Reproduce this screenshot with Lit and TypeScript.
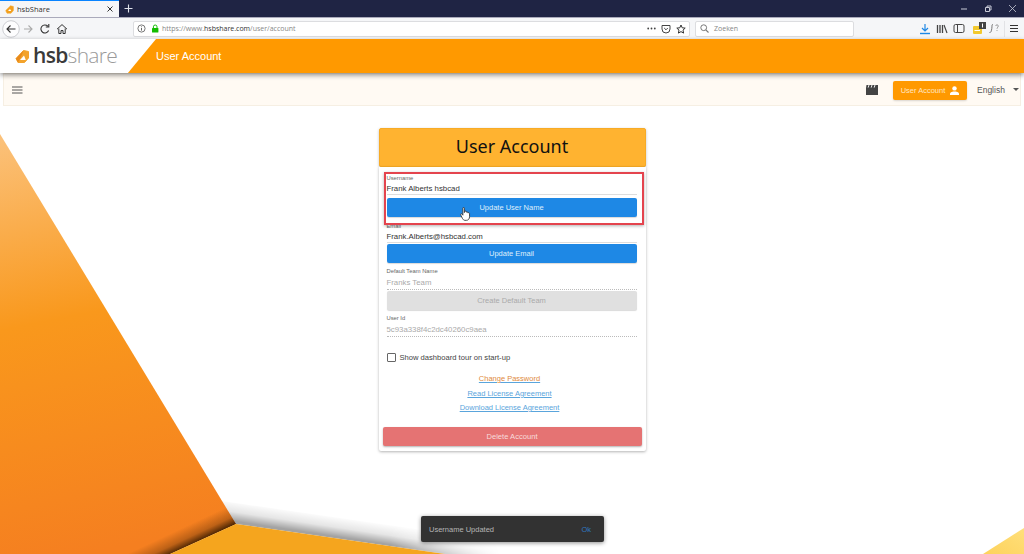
import { LitElement, html, css, svg } from "lit";
import { customElement } from "lit/decorators.js";

@customElement("app-root")
export class AppRoot extends LitElement {
  static styles = css`
    :host { display: block; font-family: "Liberation Sans", Arial, sans-serif; }
    * { box-sizing: border-box; }
    .app { position: relative; width: 1024px; height: 554px; overflow: hidden; background: #fff; display: flex; flex-direction: column; }
    .bg { position: absolute; left: 0; top: 0; }
    svg { display: block; flex: none; }

    .tabs { height: 17px; flex: none; background: #1f2444; display: flex; align-items: stretch; color: #fff; position: relative; }
    .tab { width: 119px; background: #f5f6f8; border-top: 1px solid #0a84ff; display: flex; align-items: center; padding: 0 5px; color: #333; font-size: 7.5px; gap: 3px; }
    .tab .t { flex: 1; font-family: "Open Sans", sans-serif; }
    .plus { width: 18px; display: flex; align-items: center; justify-content: center; }
    .winctl { margin-left: auto; display: flex; gap: 16px; align-items: center; padding-right: 7px; }

    .nav { height: 22px; flex: none; background: #f5f6f8; display: flex; align-items: center; border-top: 1px solid #aab; padding: 0 5px 0 2px; }
    .navbtns { display: flex; align-items: center; width: 131px; flex: none; gap: 5px; }
    .back { margin-right: -3px; }
    .urlbar { width: 557px; height: 16px; flex: none; background: #fff; border: 1px solid #dcdde0; border-radius: 2px; display: flex; align-items: center; padding: 0 3px; gap: 5px; font-size: 7px; font-family: "Open Sans", sans-serif; color: #888; }
    .urlbar b { color: #333; font-weight: 400; }
    .url { flex: 1; white-space: nowrap; margin-left: -2px; }
    .search { width: 159px; height: 16px; flex: none; margin-left: 5px; background: #fff; border: 1px solid #dcdde0; border-radius: 2px; display: flex; align-items: center; padding: 0 4px; gap: 5px; font-size: 7px; font-family: "Open Sans", sans-serif; color: #888; }
    .tools { display: flex; align-items: center; margin-left: auto; gap: 5px; }
    .yl { margin-right: -3px; }
    .sep { width: 1px; height: 16px; background: #e2e3e6; margin: 0 -1px; }

    .header { height: 34px; flex: none; background: #ff9900; position: relative; display: flex; align-items: center; box-shadow: 0 2px 5px rgba(0,0,0,.45); z-index: 2; }
    .wedge { width: 156px; height: 34px; background: #fff; clip-path: polygon(0 0, 100% 0, 82% 100%, 0 100%); display: flex; align-items: center; padding-left: 15px; gap: 3px; flex: none; }
    .logo { font-family: "Open Sans", sans-serif; font-size: 21px; letter-spacing: -.7px; line-height: 1; color: #9a9a9a; font-weight: 300; margin-top: -1px; }
    .logo b { font-weight: 600; color: #3a3a3a; }
    .htitle { color: #fff; font-size: 11px; }

    .toolbar { height: 33px; flex: none; margin: 0 3px; background: #fffaf3; border: 1px solid #f6efe3; display: flex; align-items: center; padding: 0 0 0 8px; position: relative; }
    .burger { margin-right: auto; }
    .ubtn { width: 74px; height: 19px; background: #ff9900; border-radius: 2px; color: #ffe6c2; font-size: 7.5px; display: flex; align-items: center; justify-content: center; gap: 5px; margin: 2px 0 0 15px; box-shadow: 0 1px 2px rgba(0,0,0,.15); }
    .lang { font-size: 8.5px; color: #555; margin: 1px 0 0 10px; width: 26px; }
    .caret { width: 0; height: 0; border: 3px solid transparent; border-top: 3px solid #555; border-bottom: 0; margin-left: 10px; margin-right: 1px; }

    .main { flex: 1; display: flex; justify-content: center; position: relative; padding-top: 22px; }
    .col { width: 267px; }
    .title { height: 39px; background: #ffb330; border: 1px solid #f7ab26; border-radius: 2px; box-shadow: 0 1px 3px rgba(0,0,0,.25); display: flex; align-items: center; justify-content: center; font-family: "Noto Sans", sans-serif; font-size: 18px; color: #111; padding-bottom: 3px; }
    .card { height: 284px; background: #fff; box-shadow: 0 1px 3px rgba(0,0,0,.3); border-radius: 0 0 2px 2px; padding: 7px 9px 0 8px; display: flex; flex-direction: column; }
    .hl { height: 44px; position: relative; }
    .hl::after { content: ""; position: absolute; inset: -2px -7px -7px -3px; border: 2px solid #e4444e; box-shadow: 0 1px 3px rgba(0,0,0,.3); pointer-events: none; }
    .field { display: flex; flex-direction: column; }
    .lbl { height: 8px; font-size: 5.8px; line-height: 8px; color: #666; }
    .val { height: 12px; font-size: 7.8px; line-height: 12px; color: #333; border-bottom: 1px solid #ddd; margin-top: 1px; }
    .val.off { color: #aaa; border-bottom: 1px dotted #bbb; height: 13px; margin-top: 2px; }
    .btn { height: 19px; border-radius: 2px; background: #1e88e5; color: #dfeefb; font-size: 7.5px; display: flex; align-items: center; justify-content: center; box-shadow: 0 1px 1px rgba(0,0,0,.15); }
    .btn.off { background: #e0e0e0; color: #aaa; }
    .hl .btn { margin-top: 3px; }
    .email { margin-top: 4px; }
    .gap1 { margin-top: 1px; }
    .gap4 { margin-top: 4px; }
    .check { display: flex; align-items: center; gap: 4px; font-size: 7.6px; color: #444; margin-top: 15px; height: 10px; }
    .box { width: 9px; height: 9px; border: 1px solid #666; border-radius: 1px; background: #fff; }
    .links { display: flex; flex-direction: column; align-items: center; margin-top: 10px; margin-right: 4px; font-size: 7.5px; line-height: 14.5px; text-decoration: underline; color: #5aa5dc; }
    .links .o { color: #e08a3c; }
    .del { height: 19px; margin: 11px -5px 0 -4px; border-radius: 2px; background: #e57373; color: #f8dcdc; font-size: 7.6px; display: flex; align-items: center; justify-content: center; box-shadow: 0 1px 2px rgba(0,0,0,.3); }
    .hand { position: absolute; left: 73px; top: 33px; z-index: 1; }

    .toast { position: absolute; left: 421px; top: 516px; width: 183px; height: 26px; background: #323232; border-radius: 2px; box-shadow: 0 1px 4px rgba(0,0,0,.45); display: flex; align-items: center; justify-content: space-between; padding: 0 13px 0 8px; font-size: 7.5px; color: #b5b5b5; z-index: 3; }
    .toast .ok { color: #2f78c0; }
  `;

  private background() {
    return svg`<svg class="bg" width="1024" height="554" viewBox="0 0 1024 554">
      <defs>
        <linearGradient id="o" gradientUnits="userSpaceOnUse" x1="0" y1="134" x2="84" y2="554">
          <stop offset="0" stop-color="#fbc27c"/>
          <stop offset=".45" stop-color="#f9981c"/>
          <stop offset="1" stop-color="#f57f20"/>
        </linearGradient>
        <linearGradient id="y" x1="1" y1="0" x2="0" y2="1">
          <stop offset="0" stop-color="#ffdf7a"/>
          <stop offset="1" stop-color="#fdd25c"/>
        </linearGradient>
        <linearGradient id="s" gradientUnits="userSpaceOnUse" x1="340" y1="537" x2="343" y2="517">
          <stop offset="0" stop-color="#000" stop-opacity=".36"/>
          <stop offset=".45" stop-color="#000" stop-opacity=".1"/>
          <stop offset="1" stop-color="#000" stop-opacity="0"/>
        </linearGradient>
        <linearGradient id="d" gradientUnits="userSpaceOnUse" x1="205" y1="538" x2="197" y2="521">
          <stop offset="0" stop-color="#3a1c00" stop-opacity=".88"/>
          <stop offset=".4" stop-color="#3a1c00" stop-opacity=".3"/>
          <stop offset="1" stop-color="#3a1c00" stop-opacity="0"/>
        </linearGradient>
        <linearGradient id="fade" gradientUnits="userSpaceOnUse" x1="390" y1="0" x2="500" y2="0">
          <stop offset="0" stop-color="#fff"/>
          <stop offset="1" stop-color="#000"/>
        </linearGradient>
        <mask id="m" maskUnits="userSpaceOnUse" x="0" y="0" width="1024" height="554">
          <rect width="1024" height="554" fill="url(#fade)"/>
        </mask>
      </defs>
      <polygon points="0,134 236,524 170,554 0,554" fill="url(#o)"/>
      <polygon points="236,524 170,554 120,554 120,490 222,501" fill="url(#d)"/>
      <polygon points="236,524 222,501 520,544 520,554 445,554" fill="url(#s)" mask="url(#m)"/>
      <polygon points="236,524 445,554 170,554" fill="#f5a51e"/>
      <polygon points="1024,528 1024,554 983,554" fill="url(#y)"/>
    </svg>`;
  }

  private ic(w: number, h: number, body: unknown) {
    return html`<svg width=${w} height=${h} viewBox="0 0 ${w} ${h}">${body}</svg>`;
  }

  render() {
    return html`
      <div class="app">
        ${this.background()}
        <div class="tabs">
          <div class="tab">
            ${this.ic(9, 9, svg`<path d="M5.500.8 8.400 1.500V5.600L6 8.200H2L.7 5.600Z" fill="#f3a01e" stroke="#f3a01e" stroke-width=".5" stroke-linejoin="round"/><path d="M3 6 5 4 6.200 6Z" fill="#fff"/>`)}
            <span class="t">hsbShare</span>
            ${this.ic(8, 8, svg`<path d="M1.5 1.5 6.5 6.5M6.5 1.5 1.5 6.5" stroke="#333" stroke-width="1"/>`)}
          </div>
          <div class="plus">
            ${this.ic(9, 9, svg`<path d="M4.5 .5V8.5M.5 4.5H8.5" stroke="#dfe1ea" stroke-width="1.1"/>`)}
          </div>
          <div class="winctl">
            ${this.ic(8, 8, svg`<path d="M1 4H7" stroke="#c8cad6" stroke-width="1"/>`)}
            ${this.ic(8, 8, svg`<path d="M1.5 2.5H5.5V6.5H1.5ZM3 2.5V1H7V5H5.5" stroke="#c8cad6" fill="none" stroke-width="1"/>`)}
            ${this.ic(9, 9, svg`<path d="M1 1 8 8M8 1 1 8" stroke="#c8cad6" stroke-width=".8"/>`)}
          </div>
        </div>

        <div class="nav">
          <div class="navbtns">
            <span class="back">${this.ic(18, 18, svg`<circle cx="9" cy="9" r="8.3" fill="#fdfdfe" stroke="#c2c3c8" stroke-width=".8"/><path d="M13.5 9H5M8.5 5.5 5 9 8.5 12.5" stroke="#333" stroke-width="1.1" fill="none"/>`)}</span>
            ${this.ic(12, 12, svg`<path d="M2 6H10M6.5 2.5 10 6 6.5 9.5" stroke="#aaa" stroke-width="1.1" fill="none"/>`)}
            ${this.ic(12, 12, svg`<path d="M9.6 7.5A4 4 0 1 1 8.8 3.2M9.8 1V4H6.8" stroke="#333" stroke-width="1.1" fill="none"/>`)}
            ${this.ic(12, 12, svg`<path d="M1 6.2 6 1.6 11 6.2M2.8 5.5V10.5H5V7.5H7V10.5H9.2V5.5" stroke="#333" stroke-width="1" fill="none"/>`)}
          </div>
          <div class="urlbar">
            ${this.ic(9, 9, svg`<circle cx="4.5" cy="4.5" r="3.6" fill="none" stroke="#555" stroke-width=".8"/><path d="M4.5 4V6.6M4.5 2.4V3.2" stroke="#555" stroke-width=".9"/>`)}
            ${this.ic(8, 9, svg`<rect x="1" y="4" width="6.4" height="4.6" rx=".6" fill="#12bc00"/><path d="M2.4 4V2.8A1.8 1.8 0 0 1 6 2.8V4" fill="none" stroke="#12bc00" stroke-width="1"/>`)}
            <span class="url">https://www.<b>hsbshare.com</b>/user/account</span>
            ${this.ic(9, 3, svg`<circle cx="1.2" cy="1.5" r=".9" fill="#444"/><circle cx="4.5" cy="1.5" r=".9" fill="#444"/><circle cx="7.8" cy="1.5" r=".9" fill="#444"/>`)}
            ${this.ic(10, 10, svg`<path d="M1 1.5H9V5A4 4 0 0 1 1 5Z" fill="none" stroke="#444" stroke-width="1"/><path d="M3.2 4 5 5.8 6.8 4" fill="none" stroke="#444" stroke-width="1"/>`)}
            ${this.ic(10, 10, svg`<path d="M5 1 6.2 3.8 9.2 4.1 7 6.1 7.6 9.1 5 7.6 2.4 9.1 3 6.1 .8 4.1 3.8 3.8Z" fill="none" stroke="#333" stroke-width="1"/>`)}
          </div>
          <div class="search">
            ${this.ic(9, 9, svg`<circle cx="3.7" cy="3.7" r="2.9" fill="none" stroke="#777" stroke-width="1"/><path d="M5.8 5.8 8.5 8.5" stroke="#777" stroke-width="1.1"/>`)}
            <span>Zoeken</span>
          </div>
          <div class="tools">
            ${this.ic(12, 12, svg`<path d="M6 1V8M3 5 6 8 9 5" stroke="#1e88e5" stroke-width="1.2" fill="none"/><path d="M1 10.5H11" stroke="#1e88e5" stroke-width="1.4"/>`)}
            ${this.ic(12, 11, svg`<path d="M1.5 2V10M4 2V10M6.5 2V10" stroke="#444" stroke-width="1.3"/><path d="M8 2 11 10" stroke="#444" stroke-width="1.2"/>`)}
            ${this.ic(12, 11, svg`<rect x="1" y="1.5" width="10" height="8" rx="1.5" fill="none" stroke="#444" stroke-width="1"/><path d="M4.5 2V9" stroke="#444" stroke-width="1"/>`)}
            <span class="yl">${this.ic(16, 14, svg`<rect x="3" y="4" width="9" height="8" rx="1" fill="#f2c92e"/><path d="M4.500 8.500H10" stroke="#fff" stroke-width="1"/><rect x="9" y="0" width="7" height="7" fill="#444"/><path d="M12.500 1.500V5.500" stroke="#fff" stroke-width="1"/>`)}</span>
            ${this.ic(12, 11, svg`<path d="M5 1.5C3.5 1.5 4.2 3 3.8 5.5S3 9.8 1.5 9.5" fill="none" stroke="#666" stroke-width=".9"/><path d="M7.5 3C8 1.5 10.5 1.6 10.3 3.2 10.2 4.2 9 4.4 9 5.7M9 7.2V8" fill="none" stroke="#888" stroke-width=".9"/>`)}
            <span class="sep"></span>
            ${this.ic(10, 9, svg`<path d="M1 1.5H9M1 4.5H9M1 7.5H9" stroke="#333" stroke-width="1.2"/>`)}
          </div>
        </div>

        <div class="header">
          <div class="wedge">
            ${this.ic(15, 15, svg`<path d="M8.500 1.500 13.500 2.500V9L9.500 13.500H3L1 9.500Z" fill="#f3a32c" stroke="#f3a32c" stroke-width="1" stroke-linejoin="round"/><path d="M1 9.500 8.500 1.500 6 8 3 13.500Z" fill="#e88a1c"/><path d="M5 11 9 6.500 10.800 11Z" fill="#fff"/>`)}
            <span class="logo"><b>hsb</b>share</span>
          </div>
          <span class="htitle">User Account</span>
        </div>

        <div class="toolbar">
          <span class="burger">
            ${this.ic(11, 8, svg`<path d="M0 1H10.500M0 4H10.500M0 7H10.500" stroke="#555" stroke-width="1"/>`)}
          </span>
          ${this.ic(12, 10, svg`<path d="M0 3V10H12V0H0.5Z" fill="#444"/><path d="M3 0 2.2 2.6M6 0 5.2 2.6M9 0 8.2 2.6" stroke="#fff" stroke-width=".9"/>`)}
          <div class="ubtn">
            <span>User Account</span>
            ${this.ic(9, 9, svg`<circle cx="4.5" cy="2.4" r="2.2" fill="#fff"/><path d="M0 9V7.6C0 6 3 5.4 4.5 5.4S9 6 9 7.6V9Z" fill="#fff"/>`)}
          </div>
          <span class="lang">English</span>
          <span class="caret"></span>
        </div>

        <div class="main">
          <div class="col">
            <div class="title">User Account</div>
            <div class="card">
              <div class="hl">
                <div class="field">
                  <div class="lbl">Username</div>
                  <div class="val">Frank Alberts hsbcad</div>
                </div>
                <div class="btn">Update User Name</div>
                <svg class="hand" width="12" height="14" viewBox="0 0 11 13">
                  <path d="M2.6 1.2C2.6.2 4 .2 4 1.2V5.2L4.4 3.9C5.2 3.6 5.8 3.9 5.8 4.8 6.4 4.3 7.2 4.6 7.2 5.4 7.9 5 8.8 5.4 8.8 6.4V9C8.8 11 7.6 12.4 5.8 12.4H4.6C3.4 12.4 2.8 11.6 2.2 10.6L.6 7.4C.2 6.5 1.2 5.8 1.9 6.6L2.6 7.6Z" fill="#fff" stroke="#333" stroke-width=".8"/>
                </svg>
              </div>
              <div class="field email">
                <div class="lbl">Email</div>
                <div class="val">Frank.Alberts@hsbcad.com</div>
              </div>
              <div class="btn gap1">Update Email</div>
              <div class="field gap4">
                <div class="lbl">Default Team Name</div>
                <div class="val off">Franks Team</div>
              </div>
              <div class="btn off gap1">Create Default Team</div>
              <div class="field gap4">
                <div class="lbl">User Id</div>
                <div class="val off">5c93a338f4c2dc40260c9aea</div>
              </div>
              <div class="check"><span class="box"></span><span>Show dashboard tour on start-up</span></div>
              <div class="links">
                <span class="o">Change Password</span>
                <span>Read License Agreement</span>
                <span>Download License Agreement</span>
              </div>
              <div class="del">Delete Account</div>
            </div>
          </div>
        </div>

        <div class="toast"><span>Username Updated</span><span class="ok">Ok</span></div>
      </div>
    `;
  }
}
